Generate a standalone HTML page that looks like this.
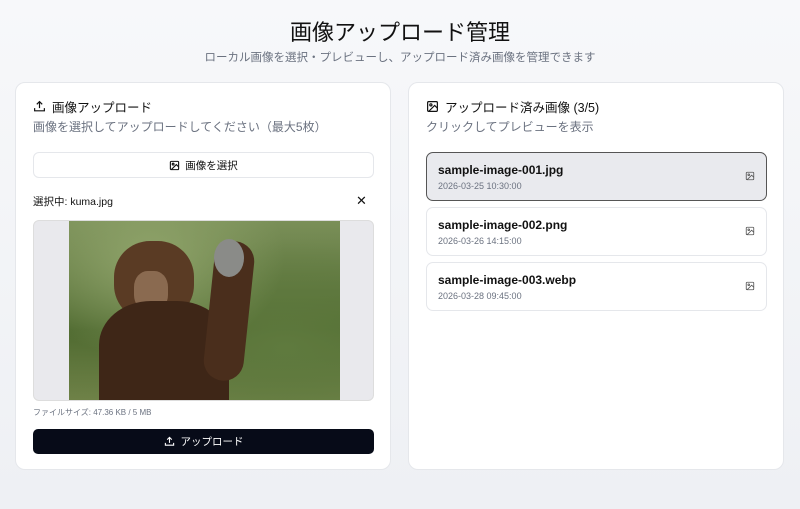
<!DOCTYPE html><html><head><meta charset="utf-8"><style>
*{box-sizing:border-box;margin:0;padding:0}
body{width:800px;height:509px;overflow:hidden;background:linear-gradient(180deg,#f7f8fa,#eef0f4);font-family:"Liberation Sans","Noto Sans CJK JP",sans-serif;color:#111;position:relative}
.a{position:absolute}
h1{position:absolute;top:15px;width:100%;text-align:center;font-size:22px;font-weight:400}
.sub{top:49px;width:100%;text-align:center;font-size:11.5px;color:#6b7280}
.card{background:#fff;border:1px solid #e5e7eb;border-radius:10px;top:82px;height:388px;width:376px}
.t{font-size:12.5px;display:flex;align-items:center;gap:6px}
.g{font-size:12px;color:#6b7280}
.item{left:17px;width:341px;height:49px;border:1px solid #e5e7eb;border-radius:7px}
.item b{position:absolute;left:11px;top:10px;font-size:12px;font-weight:600}
.item span{position:absolute;left:11px;top:28px;font-size:9px;color:#6b7280}
.item svg{position:absolute;right:11px;top:18px}
</style></head><body>
<h1>画像アップロード管理</h1>
<div class="a sub">ローカル画像を選択・プレビューし、アップロード済み画像を管理できます</div>
<div class="a card" style="left:15px">
<div class="a t" style="left:17px;top:14px"><svg width="13" height="13" viewBox="0 0 24 24" fill="none" stroke="#111" stroke-width="2.2"><path d="M12 15V3M7 8l5-5 5 5M3 15v5h18v-5"/></svg>画像アップロード</div>
<div class="a g" style="left:17px;top:35px">画像を選択してアップロードしてください（最大5枚）</div>
<div class="a" style="left:17px;top:69px;width:341px;height:26px;border:1px solid #e5e7eb;border-radius:6px;font-size:10.5px;display:flex;align-items:center;justify-content:center;gap:5px"><svg width="11" height="11" viewBox="0 0 24 24" fill="none" stroke="#111" stroke-width="2.4"><rect x="3" y="3" width="18" height="18" rx="2"/><circle cx="9" cy="9" r="2"/><path d="M21 15l-5-5L5 21"/></svg>画像を選択</div>
<div class="a" style="left:17px;top:111px;font-size:10.5px">選択中: kuma.jpg</div>
<div class="a" style="left:340px;top:110px;font-size:13px">✕</div>
<div class="a" style="left:17px;top:137px;width:341px;height:181px;border:1px solid #ddd;border-radius:6px;background:#e9e9ed;overflow:hidden">
<div class="a" style="left:35px;top:0;width:271px;height:181px;background:radial-gradient(ellipse at 30% 20%,#8fa36a,transparent 50%),radial-gradient(ellipse at 80% 70%,#5f7a3e,transparent 60%),linear-gradient(180deg,#7a8f58,#4f6a30 60%,#6f8248)">
<div class="a" style="left:45px;top:20px;width:80px;height:80px;border-radius:45%;background:#5a3b24"></div>
<div class="a" style="left:65px;top:50px;width:34px;height:40px;border-radius:40%;background:#8a6a50"></div>
<div class="a" style="left:30px;top:80px;width:130px;height:110px;border-radius:40% 40% 0 0;background:#3e2617"></div>
<div class="a" style="left:140px;top:20px;width:40px;height:140px;border-radius:20px;background:#4a2e1c;transform:rotate(6deg)"></div>
<div class="a" style="left:145px;top:18px;width:30px;height:38px;border-radius:50%;background:#8a8b88"></div>
</div></div>
<div class="a" style="left:17px;top:324px;font-size:8px;color:#6b7280">ファイルサイズ: 47.36 KB / 5 MB</div>
<div class="a" style="left:17px;top:346px;width:341px;height:25px;background:#070b18;border-radius:5px;color:#fff;font-size:10.5px;display:flex;align-items:center;justify-content:center;gap:6px"><svg width="11" height="11" viewBox="0 0 24 24" fill="none" stroke="#fff" stroke-width="2.4"><path d="M12 15V3M7 8l5-5 5 5M3 15v5h18v-5"/></svg>アップロード</div>
</div>
<div class="a card" style="left:408px">
<div class="a t" style="left:17px;top:14px"><svg width="13" height="13" viewBox="0 0 24 24" fill="none" stroke="#111" stroke-width="2.2"><rect x="3" y="3" width="18" height="18" rx="2"/><circle cx="9" cy="9" r="2"/><path d="M21 15l-5-5L5 21"/></svg>アップロード済み画像 (3/5)</div>
<div class="a g" style="left:17px;top:35px">クリックしてプレビューを表示</div>
<div class="a item" style="top:69px;background:#e9eaee;border-color:#555"><b>sample-image-001.jpg</b><span>2026-03-25 10:30:00</span><svg width="10" height="10" viewBox="0 0 24 24" fill="none" stroke="#555" stroke-width="2"><rect x="3" y="3" width="18" height="18" rx="2"/><circle cx="9" cy="9" r="2"/><path d="M21 15l-5-5L5 21"/></svg></div>
<div class="a item" style="top:124px"><b>sample-image-002.png</b><span>2026-03-26 14:15:00</span><svg width="10" height="10" viewBox="0 0 24 24" fill="none" stroke="#555" stroke-width="2"><rect x="3" y="3" width="18" height="18" rx="2"/><circle cx="9" cy="9" r="2"/><path d="M21 15l-5-5L5 21"/></svg></div>
<div class="a item" style="top:179px"><b>sample-image-003.webp</b><span>2026-03-28 09:45:00</span><svg width="10" height="10" viewBox="0 0 24 24" fill="none" stroke="#555" stroke-width="2"><rect x="3" y="3" width="18" height="18" rx="2"/><circle cx="9" cy="9" r="2"/><path d="M21 15l-5-5L5 21"/></svg></div>
</div>
</body></html>
